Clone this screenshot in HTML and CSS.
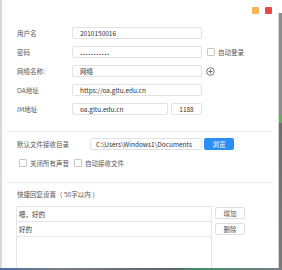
FILE: index.html
```html
<!DOCTYPE html>
<html lang="zh-CN">
<head>
    <meta charset="UTF-8">
    <meta name="viewport" content="width=device-width, initial-scale=1.0">
    <title>设置</title>
    <link rel="stylesheet" href="styles.css">
</head>
<body>
    <div class="screen">
        <div class="top">
            <div class="window">
                <div class="titlebar">
                    <span class="win-btn min"></span>
                    <span class="win-btn close"></span>
                </div>

                <div class="form">
                    <div class="row">
                        <span class="label">用户名</span>
                        <div class="input wide">2010150016</div>
                    </div>
                    <div class="row">
                        <span class="label">密码</span>
                        <div class="input wide dots">...........</div>
                        <span class="check check-right"></span>
                        <span class="check-text">自动登录</span>
                    </div>
                    <div class="row">
                        <span class="label">网络名称:</span>
                        <div class="input wide">网络</div>
                        <svg class="plus" width="9" height="9" viewBox="0 0 9 9">
                            <circle cx="4.5" cy="4.5" r="3.8" fill="none" stroke="#555" stroke-width="0.8"/>
                            <path d="M4.5 2.5v4M2.5 4.5h4" stroke="#555" stroke-width="0.8"/>
                        </svg>
                    </div>
                    <div class="row">
                        <span class="label">OA地址</span>
                        <div class="input wide">https://oa.gltu.edu.cn</div>
                    </div>
                    <div class="row">
                        <span class="label">IM地址</span>
                        <div class="input host">oa.gltu.edu.cn</div>
                        <div class="input port">1188</div>
                    </div>
                </div>

                <div class="divider"></div>

                <div class="section">
                    <div class="row">
                        <span class="label path-label">默认文件接收目录</span>
                        <div class="input path">C:\Users\Windows1\Documents</div>
                        <button class="btn-blue">浏览</button>
                    </div>
                    <div class="row options">
                        <span class="check"></span>
                        <span class="check-text">关闭所有声音</span>
                        <span class="check"></span>
                        <span class="check-text">自动接收文件</span>
                    </div>
                </div>

                <div class="divider second"></div>

                <div class="section">
                    <div class="title">快捷回复设置（ 50字以内 ）</div>
                    <div class="reply">
                        <div class="reply-list">
                            <div class="reply-item">嗯，好的</div>
                            <div class="reply-item">好的</div>
                        </div>
                        <div class="reply-buttons">
                            <button class="btn-plain">增加</button>
                            <button class="btn-plain">删除</button>
                        </div>
                    </div>
                </div>
            </div>
            <div class="side"></div>
        </div>
        <div class="taskbar"></div>
    </div>
</body>
</html>
```

FILE: styles.css
```css
* {
    box-sizing: border-box;
}

body {
    margin: 0;
    background-color: white;
    font-family: "Noto Sans CJK SC", "Noto Sans", sans-serif;
    font-size: 6.5px;
    color: #444;
}

.screen {
    width: 282px;
    height: 270px;
    display: flex;
    flex-direction: column;
    overflow: hidden;
}

.top {
    display: flex;
    height: 268px;
}

.window {
    width: 278px;
    height: 268px;
    border-left: 2px solid #d9d9d9;
    background-color: white;
    overflow: hidden;
}

.side {
    width: 4px;
    margin-top: 13px;
    border-left: 1px solid #d4d4d4;
    background: linear-gradient(to bottom, #8e8e8e 0, #8e8e8e 102px, #5fae5a 102px, #5fae5a 110px, #6d6d6d 110px, #7a7a7a 100%);
}

.taskbar {
    height: 2px;
    background: linear-gradient(to right, #4a6fa8, #7c7f86 20%, #5d6470 60%, #3f8f6a 70%, #7b7f86);
}

.titlebar {
    height: 27px;
    display: flex;
    justify-content: flex-end;
    align-items: flex-start;
    gap: 6px;
    padding: 7px 6px 0 0;
}

.win-btn {
    width: 7px;
    height: 7px;
    border-radius: 1px;
}

.win-btn.min {
    background-color: #f5b453;
}

.win-btn.close {
    background-color: #ee4646;
}

.form, .section {
    padding-left: 15px;
}

.form {
    display: flex;
    flex-direction: column;
    gap: 7px;
}

.row {
    display: flex;
    align-items: center;
    height: 12px;
}

.label {
    width: 55px;
    color: #555;
}

.input {
    height: 12px;
    line-height: 10px;
    padding: 0 7px;
    border: 1px solid #e2e2e2;
    border-radius: 2px;
    color: #333;
    white-space: nowrap;
    overflow: hidden;
}

.input.dots {
    letter-spacing: 0.6px;
    font-weight: bold;
}

.input.wide {
    width: 130px;
}

.input.host {
    width: 96px;
}

.input.port {
    width: 31px;
    margin-left: 3px;
    text-align: center;
    padding: 0;
}

.check {
    width: 8px;
    height: 8px;
    border: 1px solid #c8c8c8;
    border-radius: 1px;
    background-color: white;
}

.check-right {
    margin-left: 5px;
}

.check-text {
    margin-left: 3px;
    color: #555;
}

.plus {
    margin-left: 4px;
}

.divider {
    height: 1px;
    margin: 16px 5px 0 5px;
    background-color: #ececec;
}

.divider.second {
    margin-top: 15px;
}

.section {
    padding-top: 6px;
}

.path-label {
    width: 73px;
}

.input.path {
    width: 112px;
    padding: 0 5px;
}

.btn-blue {
    width: 30px;
    height: 12px;
    margin-left: 2px;
    padding: 0;
    border: none;
    border-radius: 2px;
    background-color: #2a8ef2;
    color: white;
    font-family: inherit;
    font-size: 6.5px;
}

.options {
    margin-top: 8px;
    height: 9px;
    padding-left: 2px;
}

.options .check-text + .check {
    margin-left: 5px;
}

.title {
    margin-top: 1px;
    height: 9px;
    line-height: 9px;
    color: #555;
}

.reply {
    display: flex;
    margin-top: 7px;
    margin-left: -1px;
}

.reply-list {
    width: 196px;
    height: 70px;
    border: 1px solid #e6e6e6;
    border-bottom: none;
}

.reply-item {
    height: 15px;
    line-height: 14px;
    padding-left: 2px;
    border-bottom: 1px solid #e6e6e6;
    color: #333;
}

.reply-buttons {
    display: flex;
    flex-direction: column;
    gap: 4px;
    margin-left: 3px;
    padding-top: 1px;
}

.btn-plain {
    width: 30px;
    height: 12px;
    padding: 0;
    border: 1px solid #e0e0e0;
    border-radius: 2px;
    background-color: white;
    color: #555;
    font-family: inherit;
    font-size: 6.5px;
}
```
